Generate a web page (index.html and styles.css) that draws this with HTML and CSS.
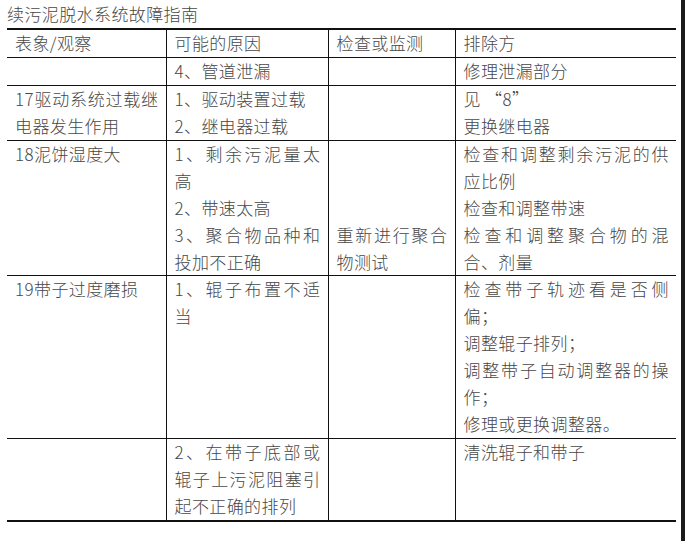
FILE: index.html
```html
<!DOCTYPE html>
<html lang="zh-CN">
<head>
<meta charset="utf-8">
<title>续污泥脱水系统故障指南</title>
<link rel="stylesheet" href="styles.css">
</head>
<body>
<div class="page">
  <div class="doc">
    <div class="title">续污泥脱水系统故障指南</div>
    <table class="guide">
      <colgroup>
        <col class="c1"><col class="c2"><col class="c3"><col class="c4">
      </colgroup>
      <tr class="head">
        <td>表象/观察</td>
        <td>可能的原因</td>
        <td>检查或监测</td>
        <td>排除方</td>
      </tr>
      <tr>
        <td></td>
        <td>4、管道泄漏</td>
        <td></td>
        <td>修理泄漏部分</td>
      </tr>
      <tr>
        <td>17驱动系统过载继电器发生作用</td>
        <td>1、驱动装置过载<br>2、继电器过载</td>
        <td></td>
        <td>见 “8”<br>更换继电器</td>
      </tr>
      <tr>
        <td>18泥饼湿度大</td>
        <td>1、剩余污泥量太高<br>2、带速太高<br>3、聚合物品种和投加不正确</td>
        <td><br><br><br>重新进行聚合物测试</td>
        <td>检查和调整剩余污泥的供应比例<br>检查和调整带速<br>检查和调整聚合物的混合、剂量</td>
      </tr>
      <tr>
        <td>19带子过度磨损</td>
        <td>1、辊子布置不适当</td>
        <td></td>
        <td>检查带子轨迹看是否侧偏；<br>调整辊子排列；<br>调整带子自动调整器的操作；<br>修理或更换调整器。</td>
      </tr>
      <tr>
        <td></td>
        <td>2、在带子底部或辊子上污泥阻塞引起不正确的排列</td>
        <td></td>
        <td>清洗辊子和带子</td>
      </tr>
    </table>
  </div>
  <div class="edge"></div>
</div>
</body>
</html>
```
FILE: styles.css
```css
html, body {
  margin: 0;
  padding: 0;
  background: #ffffff;
}
.page {
  display: flex;
  width: 688px;
  height: 541px;
  overflow: hidden;
}
.doc {
  width: 669px;
  padding-left: 7px;
  font-family: "Noto Sans CJK SC", "Noto Sans", sans-serif;
  font-size: 17px;
  font-weight: 300;
  letter-spacing: 0.4px;
  color: #474747;
}
.title {
  height: 28px;
  line-height: 20px;
  padding-top: 4px;
  box-sizing: border-box;
  white-space: nowrap;
}
.edge {
  width: 4px;
  margin-left: 5px;
  background: #1a1a1a;
}
.guide {
  width: 669px;
  table-layout: fixed;
  border-collapse: collapse;
  border-top: 2px solid #111;
  border-bottom: 2px solid #111;
}
.c1 { width: 159px; }
.c2 { width: 162px; }
.c3 { width: 127px; }
.c4 { width: 221px; }
.guide td {
  border-top: 1px solid #111;
  border-left: 1px solid #111;
  padding: 0 7px 0 8px;
  line-height: 26.94px;
  vertical-align: top;
  text-align: justify;
}
.guide td:first-child {
  border-left: none;
}
.guide tr.head td {
  border-top: none;
}
```
